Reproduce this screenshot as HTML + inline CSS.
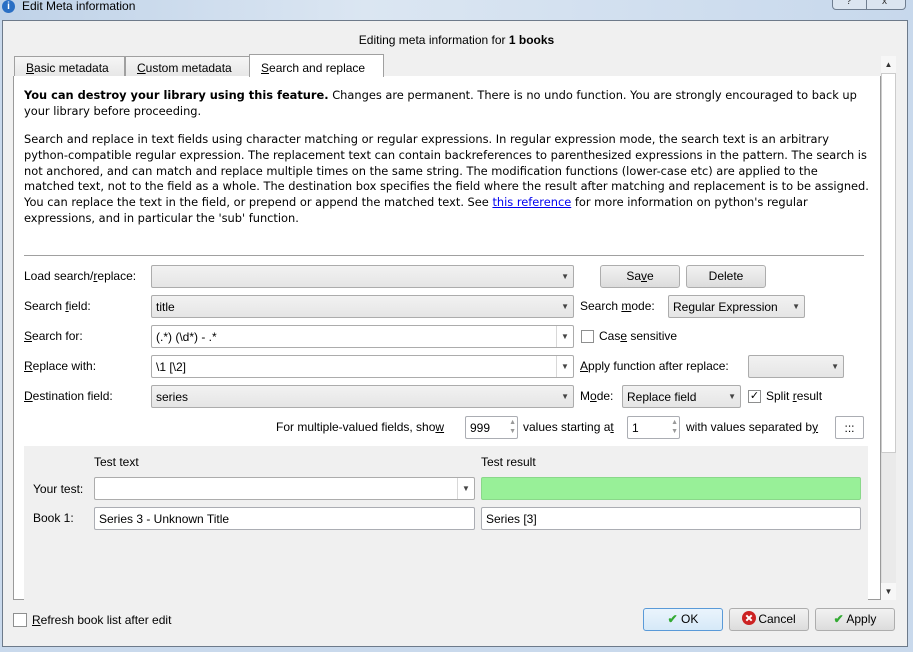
<!DOCTYPE html>
<html><head><meta charset="utf-8"><style>
*{box-sizing:border-box;margin:0;padding:0}
body{width:913px;height:652px;overflow:hidden;background:#c9d9ec;font-family:"Liberation Sans",sans-serif;font-size:12px;color:#000;position:relative}
.a{position:absolute;white-space:nowrap}
.win{position:absolute;left:2px;top:20px;width:906px;height:627px;background:#f0f0f0;border:1px solid #6d7a8a}
.panel{position:absolute;left:13px;top:76px;width:868px;height:524px;background:#fff;border:1px solid #9a9a9a;border-top:none}
.tab{position:absolute;top:56px;height:21px;border:1px solid #a0a0a0;border-bottom:none;background:linear-gradient(#f6f6f6,#e6e6e6);padding:4px 0 0 11px;font-size:12px}
.desc{font-family:"DejaVu Sans",sans-serif;font-size:11.4px;line-height:15.8px}
.cb{position:absolute;height:23px;border:1px solid #acacac;border-radius:2px;background:#fff;padding:4px 4px;white-space:nowrap}
.cb.g{background:linear-gradient(#f2f2f2,#e5e5e5)}
.arr{position:absolute;right:0;top:0;width:17px;height:21px;border-left:1px solid #d8d8d8;font-size:8px;color:#444;text-align:center;line-height:21px}
.arr2{position:absolute;right:4px;top:0;font-size:8px;color:#444;line-height:21px}
.btn{position:absolute;height:23px;border:1px solid #adadad;border-radius:3px;background:linear-gradient(#f2f2f2,#dcdcdc);text-align:center;line-height:21px}
.chk{position:absolute;width:13px;height:13px;border:1px solid #8e8f8f;background:#fff}
.ed{position:absolute;height:23px;border:1px solid #abadb3;border-radius:2px;background:#fff;padding:4px}
u{text-decoration:underline}
.ic{display:inline-block;vertical-align:middle;margin-top:-3px;margin-right:2px}
</style></head><body>
<div class="a" style="left:0;top:0;width:913px;height:20px;background:linear-gradient(90deg,#bfd2e8,#dbe6f2 40%,#c7d8ec)"></div>
<div class="a" style="left:2px;top:0;width:13px;height:13px;border-radius:50%;background:#2a6fc4;color:#fff;font-size:10px;font-weight:bold;text-align:center;line-height:13px">i</div>
<div class="a" style="left:22px;top:-1px;font-size:12px">Edit Meta information</div>
<div class="a" style="left:832px;top:-2px;width:74px;height:12px;border:1px solid #6f7e90;border-radius:0 0 4px 4px;background:#dbe5f0"></div>
<div class="a" style="left:866px;top:-2px;width:1px;height:12px;background:#6f7e90"></div>
<div class="a" style="left:846px;top:-4px;font-size:10px;color:#333">?</div>
<div class="a" style="left:882px;top:-4px;font-size:10px;color:#333">x</div>
<div class="win"></div>
<div class="a" style="left:0;top:33px;width:913px;text-align:center">Editing meta information for <b>1 books</b></div>
<div class="tab" style="left:14px;width:111px"><u>B</u>asic metadata</div>
<div class="tab" style="left:125px;width:125px"><u>C</u>ustom metadata</div>
<div class="tab" style="left:249px;top:54px;height:23px;width:135px;background:#fff;padding-top:6px;z-index:2"><u>S</u>earch and replace</div>
<div class="panel"></div>
<div class="a" style="left:881px;top:56px;width:15px;height:544px;background:#eaeaea;border-left:1px solid #ddd"></div>
<div class="a" style="left:881px;top:56px;width:15px;height:17px;background:#f7f7f7;font-size:8px;text-align:center;line-height:17px;color:#333">▲</div>
<div class="a" style="left:881px;top:583px;width:15px;height:17px;background:#f7f7f7;font-size:8px;text-align:center;line-height:17px;color:#333">▼</div>
<div class="a" style="left:881px;top:73px;width:15px;height:380px;background:#fff;border:1px solid #ccc"></div>

<div class="a desc" style="left:24px;top:88px"><b>You can destroy your library using this feature.</b> Changes are permanent. There is no undo function. You are strongly encouraged to back up<br>your library before proceeding.</div>
<div class="a desc" style="left:24px;top:132px">Search and replace in text fields using character matching or regular expressions. In regular expression mode, the search text is an arbitrary<br>python-compatible regular expression. The replacement text can contain backreferences to parenthesized expressions in the pattern. The search is<br>not anchored, and can match and replace multiple times on the same string. The modification functions (lower-case etc) are applied to the<br>matched text, not to the field as a whole. The destination box specifies the field where the result after matching and replacement is to be assigned.<br>You can replace the text in the field, or prepend or append the matched text. See <span style="color:#0000ee;text-decoration:underline">this reference</span> for more information on python's regular<br>expressions, and in particular the 'sub' function.</div>
<div class="a" style="left:24px;top:255px;width:840px;height:1px;background:#a0a0a0"></div>

<div class="a" style="left:24px;top:269px">Load search/<u>r</u>eplace:</div>
<div class="cb g" style="left:151px;top:265px;width:423px"><span class="arr2">▼</span></div>
<div class="btn" style="left:600px;top:265px;width:80px">Sa<u>v</u>e</div>
<div class="btn" style="left:686px;top:265px;width:80px">Delete</div>

<div class="a" style="left:24px;top:299px">Search <u>f</u>ield:</div>
<div class="cb g" style="left:151px;top:295px;width:423px">title<span class="arr2">▼</span></div>
<div class="a" style="left:580px;top:299px">Search <u>m</u>ode:</div>
<div class="cb g" style="left:668px;top:295px;width:137px">Regular Expression<span class="arr2">▼</span></div>

<div class="a" style="left:24px;top:329px"><u>S</u>earch for:</div>
<div class="cb" style="left:151px;top:325px;width:423px">(.*) (\d*) - .*<span class="arr">▼</span></div>
<div class="chk" style="left:581px;top:330px"></div>
<div class="a" style="left:599px;top:329px">Cas<u>e</u> sensitive</div>

<div class="a" style="left:24px;top:359px"><u>R</u>eplace with:</div>
<div class="cb" style="left:151px;top:355px;width:423px">\1 [\2]<span class="arr">▼</span></div>
<div class="a" style="left:580px;top:359px"><u>A</u>pply function after replace:</div>
<div class="cb g" style="left:748px;top:355px;width:96px"><span class="arr2">▼</span></div>

<div class="a" style="left:24px;top:389px"><u>D</u>estination field:</div>
<div class="cb g" style="left:151px;top:385px;width:423px">series<span class="arr2">▼</span></div>
<div class="a" style="left:580px;top:389px">M<u>o</u>de:</div>
<div class="cb g" style="left:622px;top:385px;width:119px">Replace field<span class="arr2">▼</span></div>
<div class="chk" style="left:748px;top:390px;font-size:11px;line-height:11px;text-align:center">✓</div>
<div class="a" style="left:766px;top:389px">Split <u>r</u>esult</div>

<div class="a" style="left:276px;top:420px">For multiple-valued fields, sho<u>w</u></div>
<div class="ed" style="left:465px;top:416px;width:53px">999<span class="a" style="right:1px;top:1px;font-size:7px;color:#999;line-height:9px">▲<br>▼</span></div>
<div class="a" style="left:523px;top:420px">values starting a<u>t</u></div>
<div class="ed" style="left:627px;top:416px;width:53px">1<span class="a" style="right:1px;top:1px;font-size:7px;color:#999;line-height:9px">▲<br>▼</span></div>
<div class="a" style="left:686px;top:420px">with values separated b<u>y</u></div>
<div class="ed" style="left:835px;top:416px;width:29px;text-align:center;padding:4px 0">:::</div>

<div class="a" style="left:24px;top:446px;width:844px;height:154px;background:#f0f0f0"></div>
<div class="a" style="left:94px;top:455px">Test text</div>
<div class="a" style="left:481px;top:455px">Test result</div>
<div class="a" style="left:33px;top:482px">Your test:</div>
<div class="cb" style="left:94px;top:477px;width:381px"><span class="arr">▼</span></div>
<div class="a" style="left:481px;top:477px;width:380px;height:23px;background:#98f098;border:1px solid #8ad88a;border-radius:2px"></div>
<div class="a" style="left:33px;top:511px">Book 1:</div>
<div class="ed" style="left:94px;top:507px;width:381px">Series 3 - Unknown Title</div>
<div class="ed" style="left:481px;top:507px;width:380px">Series [3]</div>

<div class="chk" style="left:13px;top:613px;width:14px;height:14px"></div>
<div class="a" style="left:32px;top:613px"><u>R</u>efresh book list after edit</div>
<div class="btn" style="left:643px;top:608px;width:80px;border-color:#5a9ad8;background:linear-gradient(#eaf4fc,#d6e9f8)"><span style="color:#3a3;font-weight:bold">✔</span> OK</div>
<div class="btn" style="left:729px;top:608px;width:80px"><svg class="ic" width="14" height="14" viewBox="0 0 14 14"><circle cx="7" cy="7" r="7" fill="#c22"/><path d="M4.3 4.3L9.7 9.7M9.7 4.3L4.3 9.7" stroke="#fff" stroke-width="2"/></svg>Cancel</div>
<div class="btn" style="left:815px;top:608px;width:80px"><span style="color:#3a3;font-weight:bold">✔</span> Apply</div>
</body></html>
